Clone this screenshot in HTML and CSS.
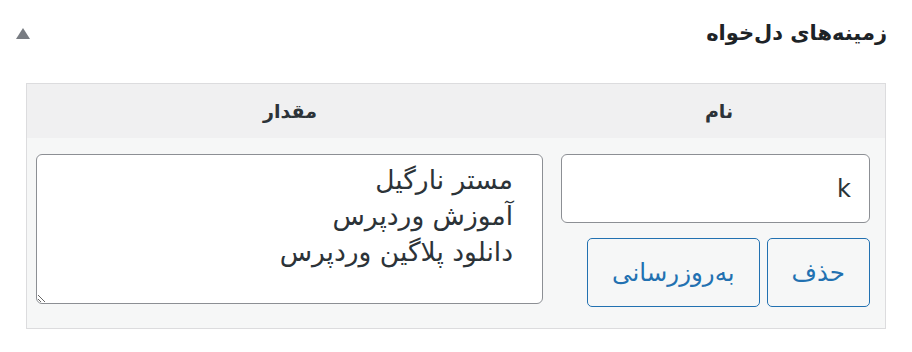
FILE: index.html
```html
<!DOCTYPE html>
<html lang="fa" dir="rtl">
<head>
<meta charset="utf-8">
<link rel="stylesheet" href="styles.css">
</head>
<body>
<div class="postbox">
  <div class="postbox-header">
    <h2 class="postbox-title">زمینه‌های دل‌خواه</h2>
    <span class="toggle" aria-hidden="true">
      <svg width="14" height="11" viewBox="0 0 14 11"><polygon points="7,0 14,11 0,11" fill="#787c82"/></svg>
    </span>
  </div>
  <div class="inside">
    <div class="list-table">
      <div class="thead">
        <div class="th">نام</div>
        <div class="th">مقدار</div>
      </div>
      <div class="tbody">
        <div class="cell-name">
          <input class="name-input" type="text" value="k">
          <div class="actions">
            <button class="btn">حذف</button>
            <button class="btn">به‌روزرسانی</button>
          </div>
        </div>
        <div class="cell-value">
          <textarea class="value-input">مستر نارگیل
آموزش وردپرس
دانلود پلاگین وردپرس</textarea>
        </div>
      </div>
    </div>
  </div>
</div>
</body>
</html>
```

FILE: styles.css
```css
html, body {
  margin: 0;
  padding: 0;
  background: #ffffff;
}
body {
  font-family: "DejaVu Sans", "Noto Sans", sans-serif;
  color: #1d2327;
}
.postbox {
  width: 912px;
}
.postbox-header {
  height: 66px;
  display: flex;
  align-items: center;
  justify-content: space-between;
  padding: 0 25px 0 16px;
}
.postbox-title {
  margin: 0;
  font-size: 21px;
  font-weight: bold;
  color: #1d2327;
}
.toggle {
  display: flex;
  align-items: center;
}
.toggle svg {
  display: block;
}
.inside {
  padding: 17px 26px 23px;
}
.list-table {
  border: 1px solid #dcdcde;
  background: #f6f7f7;
}
.thead {
  display: grid;
  grid-template-columns: 332px 1fr;
  height: 54px;
  background: #f0f0f1;
}
.th {
  display: flex;
  align-items: center;
  justify-content: center;
  font-size: 19px;
  font-weight: bold;
  color: #2c3338;
}
.tbody {
  display: grid;
  grid-template-columns: 332px 1fr;
}
.cell-name {
  padding: 16px 15px 0 8px;
  display: flex;
  flex-direction: column;
}
.cell-value {
  padding: 16px 10px 24px 9px;
}
.name-input {
  box-sizing: border-box;
  width: 100%;
  height: 69px;
  margin: 0;
  border: 1px solid #8c8f94;
  border-radius: 6px;
  background: #fff;
  padding: 0 18px;
  font-family: "DejaVu Sans", sans-serif;
  font-size: 24px;
  color: #2c3338;
  direction: rtl;
}
.actions {
  display: flex;
  gap: 7px;
  margin-top: 15px;
}
.btn {
  height: 69px;
  padding: 0 24px;
  margin: 0;
  border: 1px solid #2271b1;
  border-radius: 5px;
  background: #f6f7f7;
  color: #2271b1;
  font-family: "DejaVu Sans", sans-serif;
  font-size: 24.5px;
}
.value-input {
  display: block;
  box-sizing: border-box;
  width: 100%;
  height: 150px;
  margin: 0;
  border: 1px solid #8c8f94;
  border-radius: 6px;
  background: #fff;
  padding: 7px 29px 0 6px;
  font-family: "DejaVu Sans", sans-serif;
  font-size: 26.5px;
  line-height: 36px;
  color: #2c3338;
  overflow: hidden;
}
```
